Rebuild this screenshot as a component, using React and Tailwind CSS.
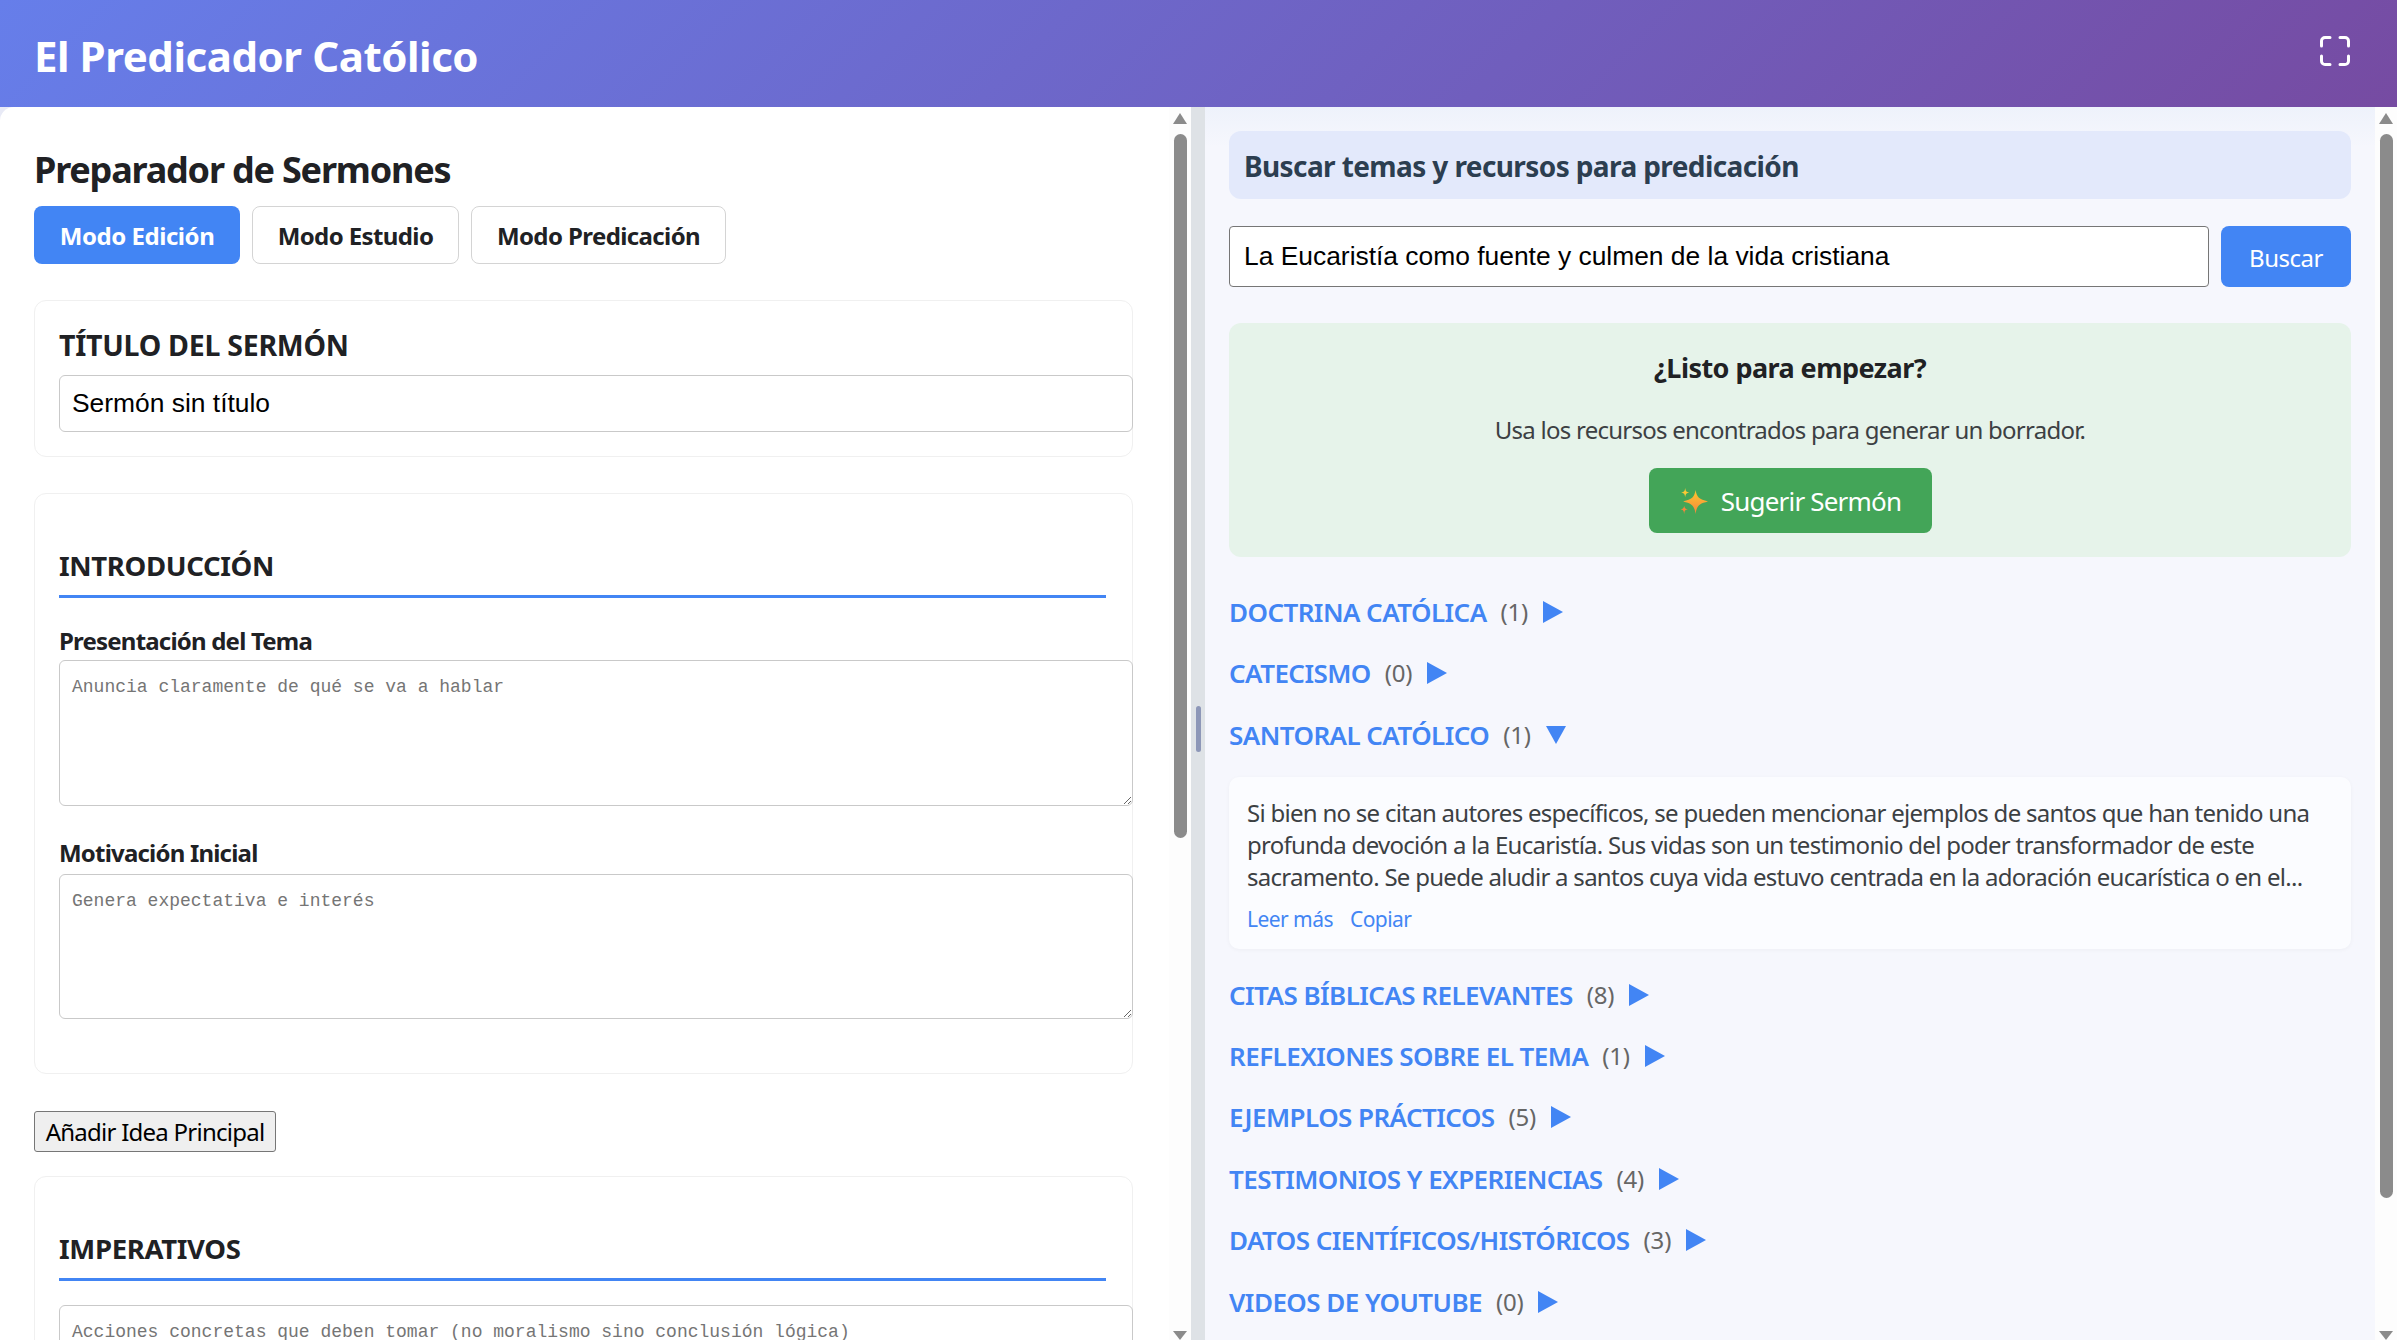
import React from 'react';

const SANS = "font-['Noto_Sans',sans-serif]";

/* ── Scrollbar drawn like the browser's ── */
function FakeScrollbar({ thumbHeight }) {
    return (
        <div className="w-[22px] shrink-0 bg-[#fdfdfd] flex flex-col items-center">
            <div className="mt-[6px] w-0 h-0 border-x-[7.5px] border-x-transparent border-b-[11px] border-b-[#8b8b8b]" />
            <div className="mt-[10px] w-[13px] rounded-full bg-[#8b8b8b]" style={{ height: thumbHeight }} />
            <div className="mt-auto w-0 h-0 border-x-[7.5px] border-x-transparent border-t-[9px] border-t-[#8b8b8b]" />
        </div>
    );
}

function Card({ className = '', children }) {
    return <div className={`ml-[34px] w-[1099px] bg-white border border-[#f0f0f0] rounded-[12px] px-[24px] ${className}`}>{children}</div>;
}

function SectionTitle({ children, className = '' }) {
    return (
        <div className={`w-[1047px] h-[50px] border-b-[3px] border-[#4285f4] ${className}`}>
            <h3 className="text-[27.5px] leading-[36px] font-bold text-[#202124] tracking-[-0.35px]">{children}</h3>
        </div>
    );
}

function Area({ placeholder, className = '' }) {
    return (
        <textarea
            placeholder={placeholder}
            className={`block w-[1074px] border-[1.5px] border-[#c9c9c9] rounded-[6px] px-[12px] pt-[15px] pb-[9px] bg-white font-['Liberation_Mono',monospace] text-[18px] leading-[22px] placeholder:text-[#757575] ${className}`}
        />
    );
}

function Section({ title, count, open, className = '' }) {
    return (
        <div className={`h-[36px] flex items-center ${className}`}>
            <span className="text-[26px] leading-[36px] font-semibold text-[#4285f4] tracking-[-0.55px]">{title}</span>
            <span className="ml-[14px] text-[24px] leading-[36px] text-[#666666] tracking-[-0.2px]">({count})</span>
            {open ? (
                <span className="ml-[15px] w-0 h-0 border-x-[10.5px] border-x-transparent border-t-[18px] border-t-[#4285f4]" />
            ) : (
                <span className="ml-[15px] w-0 h-0 border-y-[11px] border-y-transparent border-l-[20px] border-l-[#4285f4]" />
            )}
        </div>
    );
}

function Sparkles() {
    return (
        <svg width="29" height="27" viewBox="0 0 28 26" className="mr-[13px]">
            <defs>
                <linearGradient id="spark" x1="0" y1="0" x2="0" y2="1">
                    <stop offset="0" stopColor="#fdc92f" />
                    <stop offset="1" stopColor="#f7853c" />
                </linearGradient>
            </defs>
            <path d="M16 2 C17.2 9 19.5 11 28 13 C19.5 15 17.2 17 16 25 C14.8 17 12.5 15 4 13 C12.5 11 14.8 9 16 2 Z" fill="url(#spark)" />
            <path d="M6 0 C6.5 3 7 3.8 10 4.4 C7 5 6.5 5.8 6 9 C5.5 5.8 5 5 2 4.4 C5 3.8 5.5 3 6 0 Z" fill="#fcc934" />
            <path d="M5 17 C5.4 19.4 6 20 8.5 20.6 C6 21.2 5.4 21.8 5 25 C4.6 21.8 4 21.2 1.5 20.6 C4 20 4.6 19.4 5 17 Z" fill="#f7853c" />
        </svg>
    );
}

function LeftPanel() {
    return (
        <div className="w-[1191px] shrink-0 h-full bg-white rounded-tl-[14px] flex overflow-hidden">
            <div className="flex-1 overflow-hidden min-w-0">
                <h2 className="ml-[34px] mt-[42px] text-[36px] leading-[42px] font-bold text-[#202124] tracking-[-1.2px]">Preparador de Sermones</h2>
                <div className="ml-[34px] mt-[15px] flex gap-[12px]">
                    <button className="w-[206px] h-[58px] pt-[2px] rounded-[8px] bg-[#4285f4] text-white text-[24px] font-bold tracking-[-0.45px]">Modo Edición</button>
                    <button className="w-[207px] h-[58px] pt-[2px] rounded-[8px] bg-white border-[1.5px] border-[#d4d4d4] text-[#202124] text-[24px] font-bold tracking-[-0.6px]">Modo Estudio</button>
                    <button className="w-[255px] h-[58px] pt-[2px] rounded-[8px] bg-white border-[1.5px] border-[#d4d4d4] text-[#202124] text-[24px] font-bold tracking-[-0.6px]">Modo Predicación</button>
                </div>

                <Card className="mt-[36px] h-[157px] pt-[26px]">
                    <h3 className="text-[28.5px] leading-[36px] font-bold text-[#202124] tracking-[-0.25px]">TÍTULO DEL SERMÓN</h3>
                    <input
                        readOnly
                        value="Sermón sin título"
                        className="block mt-[12px] w-[1074px] h-[57px] border-[1.5px] border-[#c9c9c9] rounded-[6px] px-[12px] bg-white font-['Liberation_Sans',sans-serif] text-[26.4px] text-black"
                    />
                </Card>

                <Card className="mt-[36px] h-[581px] pt-[54px]">
                    <SectionTitle>INTRODUCCIÓN</SectionTitle>
                    <label className="block mt-[27px] text-[24px] leading-[32px] font-bold text-[#202124] tracking-[-0.8px]">Presentación del Tema</label>
                    <Area className="mt-[3px] h-[146px]" placeholder="Anuncia claramente de qué se va a hablar" />
                    <label className="block mt-[31px] text-[24px] leading-[32px] font-bold text-[#202124] tracking-[-0.8px]">Motivación Inicial</label>
                    <Area className="mt-[5px] h-[145px]" placeholder="Genera expectativa e interés" />
                </Card>

                <button className="block ml-[34px] mt-[37px] w-[242px] h-[41px] pt-[1px] bg-[#efefef] border border-[#767676] rounded-[3px] text-[24px] leading-[32px] text-black tracking-[-0.75px]">Añadir Idea Principal</button>

                <Card className="mt-[24px] h-[300px] pt-[54px]">
                    <SectionTitle>IMPERATIVOS</SectionTitle>
                    <Area className="mt-[24px] h-[146px]" placeholder="Acciones concretas que deben tomar (no moralismo sino conclusión lógica)" />
                </Card>
            </div>
            <FakeScrollbar thumbHeight={704} />
        </div>
    );
}

function RightPanel() {
    return (
        <div className="flex-1 min-w-0 h-full flex bg-[linear-gradient(#eef2fb,#f6f7fd_40px)]">
            <div className="flex-1 min-w-0 overflow-hidden px-[24px] pt-[24px]">
                <div className="h-[68px] pt-[2px] rounded-[12px] bg-[#e3e9fb] px-[15px] flex items-center">
                    <h3 className="text-[28px] font-bold text-[#2c3e50] tracking-[-0.6px]">Buscar temas y recursos para predicación</h3>
                </div>
                <div className="mt-[27px] flex gap-[12px]">
                    <input
                        readOnly
                        value="La Eucaristía como fuente y culmen de la vida cristiana"
                        className="flex-1 min-w-0 h-[61px] border-[1.5px] border-[#767676] rounded-[4px] px-[14px] bg-white font-['Liberation_Sans',sans-serif] text-[26.4px] text-black"
                    />
                    <button className="w-[130px] h-[61px] pt-[2px] rounded-[8px] bg-[#4285f4] text-white text-[24px] tracking-[-0.5px]">Buscar</button>
                </div>
                <div className="mt-[36px] h-[234px] rounded-[12px] bg-[#e6f3ea] flex flex-col items-center pt-[27px]">
                    <h4 className="text-[27px] leading-[36px] font-bold text-[#202124] tracking-[-0.55px]">¿Listo para empezar?</h4>
                    <p className="mt-[28px] text-[24px] leading-[32px] text-[#3c4043] tracking-[-0.75px]">Usa los recursos encontrados para generar un borrador.</p>
                    <button className="mt-[22px] w-[283px] h-[65px] pt-[2px] rounded-[8px] bg-[#43a558] text-white text-[26px] tracking-[-0.8px] flex items-center justify-center">
                        <Sparkles />Sugerir Sermón
                    </button>
                </div>

                <Section className="mt-[37px]" title="DOCTRINA CATÓLICA" count={1} />
                <Section className="mt-[25px]" title="CATECISMO" count={0} />
                <Section className="mt-[26px]" title="SANTORAL CATÓLICO" count={1} open />

                <div className="mt-[24px] h-[172px] rounded-[10px] bg-[#fbfcff] shadow-[0_1px_4px_rgba(0,0,0,0.04)] px-[18px] pt-[20px]">
                    <p className="text-[24px] leading-[32px] text-[#3c4043] tracking-[-0.72px]">
                        Si bien no se citan autores específicos, se pueden mencionar ejemplos de santos que han tenido una profunda devoción a la Eucaristía. Sus vidas son un testimonio del poder transformador de este sacramento. Se puede aludir a santos cuya vida estuvo centrada en la adoración eucarística o en el...
                    </p>
                    <div className="mt-[12px] flex gap-[17px] text-[21px] leading-[28px] text-[#4285f4] tracking-[-0.55px]">
                        <span>Leer más</span>
                        <span>Copiar</span>
                    </div>
                </div>

                <Section className="mt-[28px]" title="CITAS BÍBLICAS RELEVANTES" count={8} />
                <Section className="mt-[25px]" title="REFLEXIONES SOBRE EL TEMA" count={1} />
                <Section className="mt-[25px]" title="EJEMPLOS PRÁCTICOS" count={5} />
                <Section className="mt-[26px]" title="TESTIMONIOS Y EXPERIENCIAS" count={4} />
                <Section className="mt-[25px]" title="DATOS CIENTÍFICOS/HISTÓRICOS" count={3} />
                <Section className="mt-[26px]" title="VIDEOS DE YOUTUBE" count={0} />
            </div>
            <FakeScrollbar thumbHeight={1064} />
        </div>
    );
}

export default function App() {
    return (
        <div className={`h-[1340px] w-[2397px] flex flex-col overflow-hidden bg-[#e8eaf6] ${SANS}`}>
            <header className="h-[107px] shrink-0 flex items-center justify-between pl-[34px] pr-[47px] bg-linear-[135deg] from-[#667eea] to-[#764ba2] text-white">
                <h1 className="pt-[4px] text-[42px] font-bold tracking-[-0.45px]">El Predicador Católico</h1>
                {/* fullscreen corners */}
                <svg width="30" height="30" viewBox="0 0 30 30" fill="none" stroke="currentColor" strokeWidth="3" strokeLinecap="round" className="-mt-[5px]">
                    <path d="M1.5 10V5a3.5 3.5 0 0 1 3.5-3.5h5" />
                    <path d="M20 1.5h5a3.5 3.5 0 0 1 3.5 3.5v5" />
                    <path d="M28.5 20v5a3.5 3.5 0 0 1-3.5 3.5h-5" />
                    <path d="M10 28.5H5A3.5 3.5 0 0 1 1.5 25v-5" />
                </svg>
            </header>
            <main className="flex-1 min-h-0 flex">
                <LeftPanel />
                <div className="w-[14px] shrink-0 bg-[#dee2e6] flex items-center justify-center">
                    <div className="w-[5px] h-[46px] rounded-full bg-[#8d97b8] translate-y-[5px]" />
                </div>
                <RightPanel />
            </main>
        </div>
    );
}
